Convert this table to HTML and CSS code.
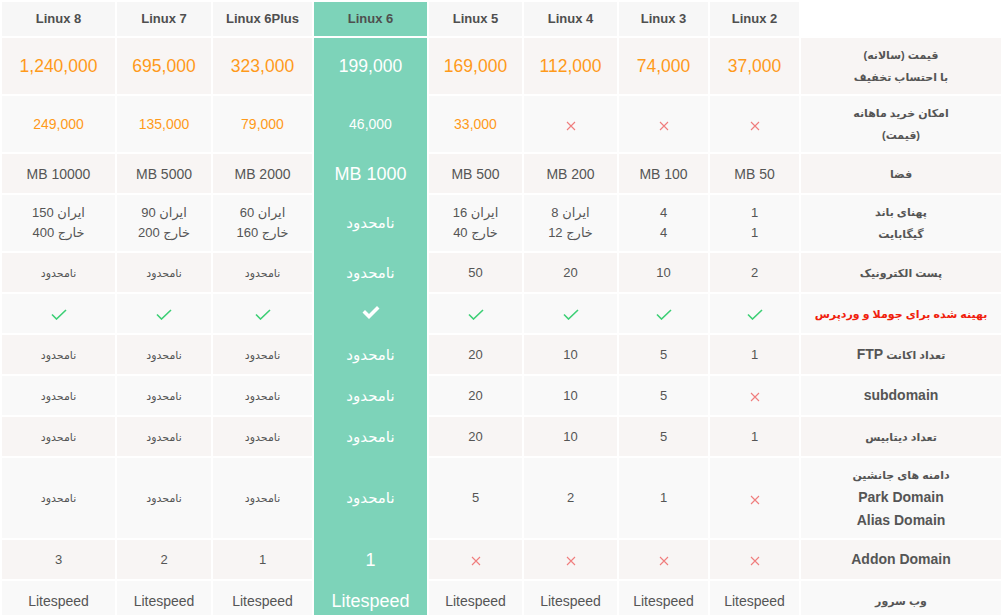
FILE: index.html
```html
<!DOCTYPE html>
<html lang="fa">
<head>
<meta charset="utf-8">
<title>Linux hosting plans</title>
<link rel="stylesheet" href="styles.css">
</head>
<body>
<table class="plans">
  <colgroup>
    <col class="w113"><col class="w94"><col class="w99"><col class="w113"><col class="w93"><col class="w93"><col class="w89"><col class="w89"><col class="w200">
  </colgroup>
  <thead>
    <tr>
      <th>Linux 8</th><th>Linux 7</th><th>Linux 6Plus</th><th class="hl">Linux 6</th><th>Linux 5</th><th>Linux 4</th><th>Linux 3</th><th>Linux 2</th><th class="blank"></th>
    </tr>
  </thead>
  <tbody>
    <tr class="odd">
      <td class="price">1,240,000</td><td class="price">695,000</td><td class="price">323,000</td><td class="hl price">199,000</td><td class="price">169,000</td><td class="price">112,000</td><td class="price">74,000</td><td class="price">37,000</td>
      <td class="label" dir="rtl">قیمت (سالانه)<br>با احتساب تخفیف</td>
    </tr>
    <tr class="even">
      <td class="price-sm">249,000</td><td class="price-sm">135,000</td><td class="price-sm">79,000</td><td class="hl">46,000</td><td class="price-sm">33,000</td>
      <td><svg class="no" viewBox="0 0 10 10"><path d="M1 1L9 9M9 1L1 9"/></svg></td>
      <td><svg class="no" viewBox="0 0 10 10"><path d="M1 1L9 9M9 1L1 9"/></svg></td>
      <td><svg class="no" viewBox="0 0 10 10"><path d="M1 1L9 9M9 1L1 9"/></svg></td>
      <td class="label" dir="rtl">امکان خرید ماهانه<br>(قیمت)</td>
    </tr>
    <tr class="odd">
      <td>MB 10000</td><td>MB 5000</td><td>MB 2000</td><td class="hl big">MB 1000</td><td>MB 500</td><td>MB 200</td><td>MB 100</td><td>MB 50</td>
      <td class="label" dir="rtl">فضا</td>
    </tr>
    <tr class="even">
      <td class="bw" dir="rtl">ایران 150<br>خارج 400</td><td class="bw" dir="rtl">ایران 90<br>خارج 200</td><td class="bw" dir="rtl">ایران 60<br>خارج 160</td><td class="hl fa" dir="rtl">نامحدود</td><td class="bw" dir="rtl">ایران 16<br>خارج 40</td><td class="bw" dir="rtl">ایران 8<br>خارج 12</td><td class="bw">4<br>4</td><td class="bw">1<br>1</td>
      <td class="label" dir="rtl">پهنای باند<br>گیگابایت</td>
    </tr>
    <tr class="odd">
      <td class="fa-sm" dir="rtl">نامحدود</td><td class="fa-sm" dir="rtl">نامحدود</td><td class="fa-sm" dir="rtl">نامحدود</td><td class="hl fa" dir="rtl">نامحدود</td><td class="num">50</td><td class="num">20</td><td class="num">10</td><td class="num">2</td>
      <td class="label" dir="rtl">پست الکترونیک</td>
    </tr>
    <tr class="even">
      <td><svg class="yes" viewBox="0 0 16 11"><path d="M1 5.5L5.5 10L15 1"/></svg></td>
      <td><svg class="yes" viewBox="0 0 16 11"><path d="M1 5.5L5.5 10L15 1"/></svg></td>
      <td><svg class="yes" viewBox="0 0 16 11"><path d="M1 5.5L5.5 10L15 1"/></svg></td>
      <td class="hl"><svg class="yes-w" viewBox="0 0 18 14"><path d="M0.5 7.5L3 5L7 9L15 1L17.5 3.5L7 14Z"/></svg></td>
      <td><svg class="yes" viewBox="0 0 16 11"><path d="M1 5.5L5.5 10L15 1"/></svg></td>
      <td><svg class="yes" viewBox="0 0 16 11"><path d="M1 5.5L5.5 10L15 1"/></svg></td>
      <td><svg class="yes" viewBox="0 0 16 11"><path d="M1 5.5L5.5 10L15 1"/></svg></td>
      <td><svg class="yes" viewBox="0 0 16 11"><path d="M1 5.5L5.5 10L15 1"/></svg></td>
      <td class="label red" dir="rtl">بهینه شده برای جوملا و وردپرس</td>
    </tr>
    <tr class="odd">
      <td class="fa-sm" dir="rtl">نامحدود</td><td class="fa-sm" dir="rtl">نامحدود</td><td class="fa-sm" dir="rtl">نامحدود</td><td class="hl fa" dir="rtl">نامحدود</td><td class="num">20</td><td class="num">10</td><td class="num">5</td><td class="num">1</td>
      <td class="label" dir="rtl">تعداد اکانت <span class="lat">FTP</span></td>
    </tr>
    <tr class="even">
      <td class="fa-sm" dir="rtl">نامحدود</td><td class="fa-sm" dir="rtl">نامحدود</td><td class="fa-sm" dir="rtl">نامحدود</td><td class="hl fa" dir="rtl">نامحدود</td><td class="num">20</td><td class="num">10</td><td class="num">5</td>
      <td><svg class="no" viewBox="0 0 10 10"><path d="M1 1L9 9M9 1L1 9"/></svg></td>
      <td class="label"><span class="lat">subdomain</span></td>
    </tr>
    <tr class="odd">
      <td class="fa-sm" dir="rtl">نامحدود</td><td class="fa-sm" dir="rtl">نامحدود</td><td class="fa-sm" dir="rtl">نامحدود</td><td class="hl fa" dir="rtl">نامحدود</td><td class="num">20</td><td class="num">10</td><td class="num">5</td><td class="num">1</td>
      <td class="label" dir="rtl">تعداد دیتابیس</td>
    </tr>
    <tr class="even">
      <td class="fa-sm" dir="rtl">نامحدود</td><td class="fa-sm" dir="rtl">نامحدود</td><td class="fa-sm" dir="rtl">نامحدود</td><td class="hl fa" dir="rtl">نامحدود</td><td class="num">5</td><td class="num">2</td><td class="num">1</td>
      <td><svg class="no" viewBox="0 0 10 10"><path d="M1 1L9 9M9 1L1 9"/></svg></td>
      <td class="label" dir="rtl">دامنه های جانشین<br><span class="lat">Park Domain</span><br><span class="lat">Alias Domain</span></td>
    </tr>
    <tr class="odd">
      <td class="num">3</td><td class="num">2</td><td class="num">1</td><td class="hl big">1</td>
      <td><svg class="no" viewBox="0 0 10 10"><path d="M1 1L9 9M9 1L1 9"/></svg></td>
      <td><svg class="no" viewBox="0 0 10 10"><path d="M1 1L9 9M9 1L1 9"/></svg></td>
      <td><svg class="no" viewBox="0 0 10 10"><path d="M1 1L9 9M9 1L1 9"/></svg></td>
      <td><svg class="no" viewBox="0 0 10 10"><path d="M1 1L9 9M9 1L1 9"/></svg></td>
      <td class="label"><span class="lat">Addon Domain</span></td>
    </tr>
    <tr class="even">
      <td>Litespeed</td><td>Litespeed</td><td>Litespeed</td><td class="hl big">Litespeed</td><td>Litespeed</td><td>Litespeed</td><td>Litespeed</td><td>Litespeed</td>
      <td class="label" dir="rtl">وب سرور</td>
    </tr>
  </tbody>
</table>
</body>
</html>
```

FILE: styles.css
```css
html, body {
  margin: 0;
  padding: 0;
  background: #fff;
  overflow: hidden;
}

.plans {
  border-collapse: separate;
  border-spacing: 2px;
  table-layout: fixed;
  width: 1003px;
  font-family: "Liberation Sans", "DejaVu Sans", sans-serif;
  color: #555;
}

.w113 { width: 113px; }
.w94 { width: 94px; }
.w99 { width: 99px; }
.w93 { width: 93px; }
.w89 { width: 89px; }
.w200 { width: 200px; }

.plans th,
.plans td {
  box-sizing: border-box;
  padding: 6px 0;
  text-align: center;
  vertical-align: middle;
  line-height: 22px;
  font-size: 14px;
  font-weight: normal;
}

.plans th {
  height: 34px;
  padding: 0;
  background: #f7f7f7;
  font-size: 13px;
  font-weight: bold;
  color: #4f4f4f;
}

.plans th.blank {
  background: transparent;
}

.plans td {
  height: 39px;
}

.plans tr.odd td {
  background: #f8f5f4;
}

.plans tr.even td {
  background: #f9f9f9;
}

.plans th.hl {
  background: #7dd3b9;
}

.plans tr td.hl {
  background: #7dd3b9;
  color: #fff;
  box-shadow: 0 2px 0 #7dd3b9;
}

.price {
  font-size: 17.5px !important;
  color: #ff9a1a;
}

.price-sm {
  color: #ff9a1a;
}

.plans td.hl.price {
  color: #fff;
}

.plans td.big {
  font-size: 18px;
}

.plans td.fa {
  font-size: 15px;
  font-weight: normal;
}

.plans td.fa-sm {
  font-size: 11px;
}

.plans td.bw {
  font-size: 13px;
  line-height: 20px;
}

.plans td.num {
  font-size: 13px;
}

.plans td.label {
  font-size: 11px;
  font-weight: bold;
  color: #555;
}

.plans td.label.red {
  color: #f0200c;
}

.lat {
  font-family: "Liberation Sans", sans-serif;
  font-size: 14px;
  font-weight: bold;
}

.no {
  display: block;
  width: 10px;
  height: 10px;
  margin: 3px auto 0;
  fill: none;
  stroke: #f07d7d;
  stroke-width: 1.1;
}

.yes {
  display: block;
  width: 16px;
  height: 11px;
  margin: 2px auto 0;
  fill: none;
  stroke: #3ccf75;
  stroke-width: 1.6;
}

.yes-w {
  display: block;
  width: 18px;
  height: 14px;
  margin: -3px auto 0;
  fill: #fff;
}
```
